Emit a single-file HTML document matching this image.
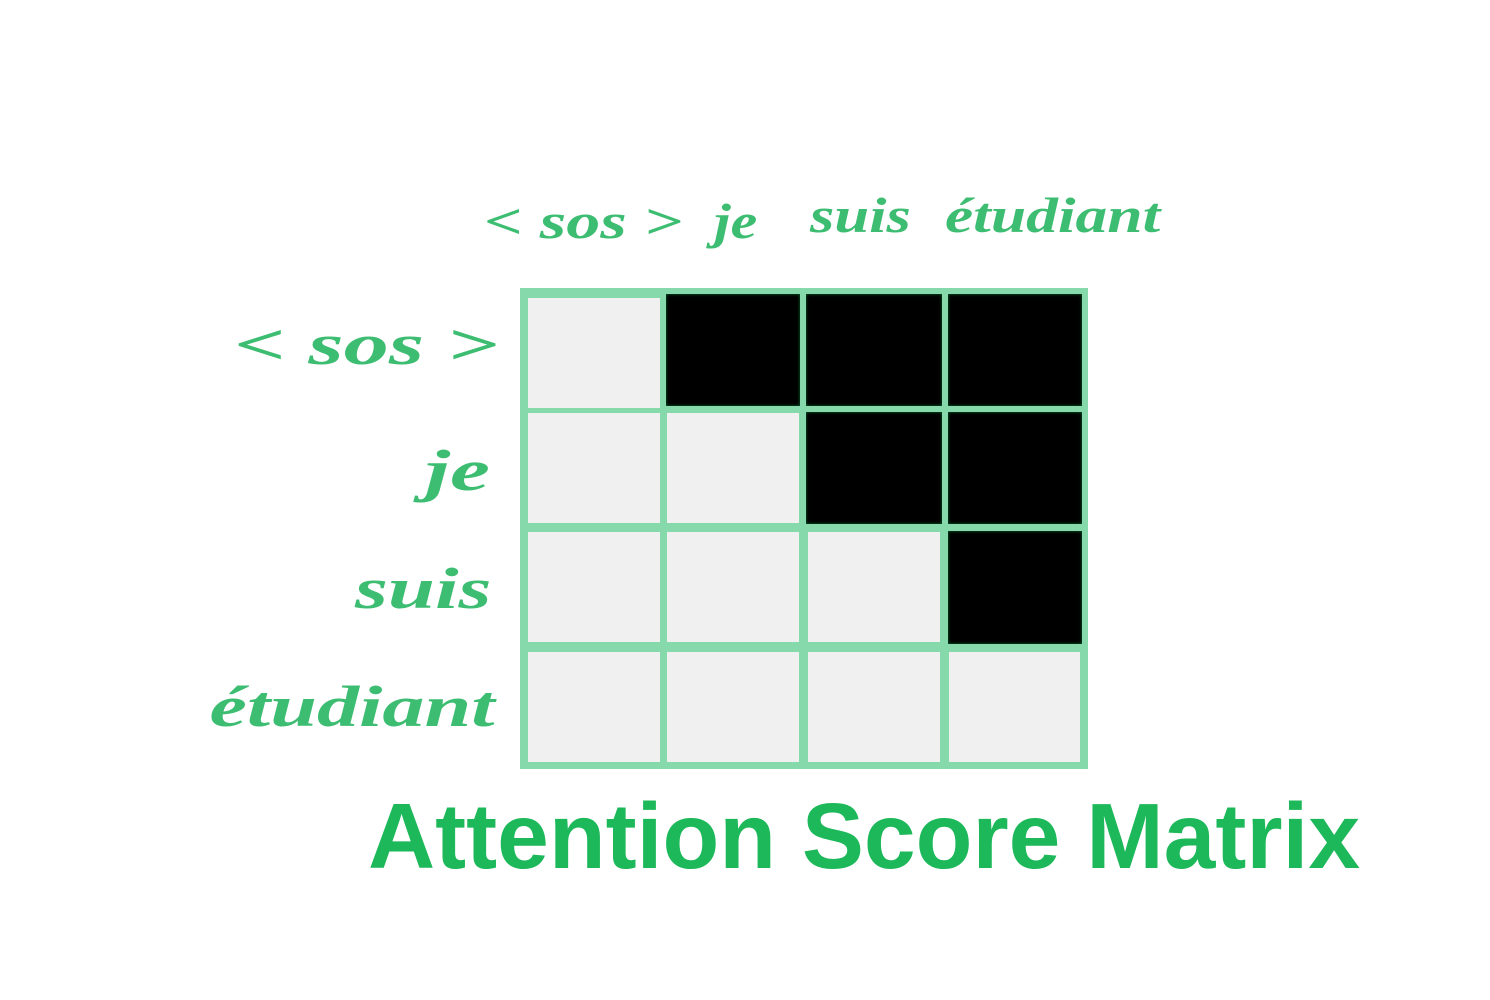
<!DOCTYPE html>
<html><head><meta charset="utf-8"><style>
html,body{margin:0;padding:0;background:#fff;width:1490px;height:1000px;overflow:hidden;position:relative}
.c{position:absolute;width:132px;height:110px;background:#f0f0f0}
.b{background:#000;box-shadow:inset 0 0 3px #0a6a30}
.h{position:absolute;background:#86d9aa}
.t{position:absolute;font-family:"Liberation Serif",serif;font-style:italic;font-weight:bold;color:#3dbd72;white-space:nowrap;line-height:1}
.r{transform-origin:right center}
.l{transform-origin:left center}
.title{position:absolute;left:368px;top:790px;font-family:"Liberation Sans",sans-serif;font-weight:bold;font-size:93px;color:#1cb85a;line-height:1;white-space:nowrap}
</style></head><body>
<div class="h" style="left:520px;top:288px;width:568px;height:481px"></div>
<div class="c" style="left:528px;top:298px"></div>
<div class="c b" style="left:666px;top:294px;width:134px;height:112px"></div>
<div class="c b" style="left:806px;top:294px;width:136px;height:112px"></div>
<div class="c b" style="left:948px;top:294px;width:134px;height:112px"></div>

<div class="c" style="left:528px;top:413px"></div>
<div class="c" style="left:667px;top:413px"></div>
<div class="c b" style="left:806px;top:412px;width:136px;height:112px"></div>
<div class="c b" style="left:948px;top:412px;width:134px;height:112px"></div>

<div class="c" style="left:528px;top:532px"></div>
<div class="c" style="left:667px;top:532px"></div>
<div class="c" style="left:808px;top:532px"></div>
<div class="c b" style="left:948px;top:531px;width:134px;height:113px"></div>

<div class="c" style="left:528px;top:652px"></div>
<div class="c" style="left:667px;top:652px"></div>
<div class="c" style="left:808px;top:652px"></div>
<div class="c" style="left:949px;top:652px;width:131px"></div>

<div class="t l" style="left:484px;top:196px;font-size:50px;transform:scaleX(1.36)">&lt; sos &gt;</div>
<div class="t l" style="left:714px;top:196px;font-size:50px;transform:scaleX(1.2)">je</div>
<div class="t l" style="left:810px;top:190px;font-size:50px;transform:scaleX(1.25)">suis</div>
<div class="t l" style="left:945px;top:190px;font-size:50px;transform:scaleX(1.27)">étudiant</div>

<div class="t r" style="right:992px;top:316px;font-size:58px;transform:scaleX(1.56)">&lt; sos &gt;</div>
<div class="t r" style="right:1000px;top:442px;font-size:58px;transform:scaleX(1.55)">je</div>
<div class="t r" style="right:998px;top:560px;font-size:58px;transform:scaleX(1.46)">suis</div>
<div class="t r" style="right:995px;top:678px;font-size:58px;transform:scaleX(1.45)">étudiant</div>

<div class="title">Attention Score Matrix</div>
</body></html>
